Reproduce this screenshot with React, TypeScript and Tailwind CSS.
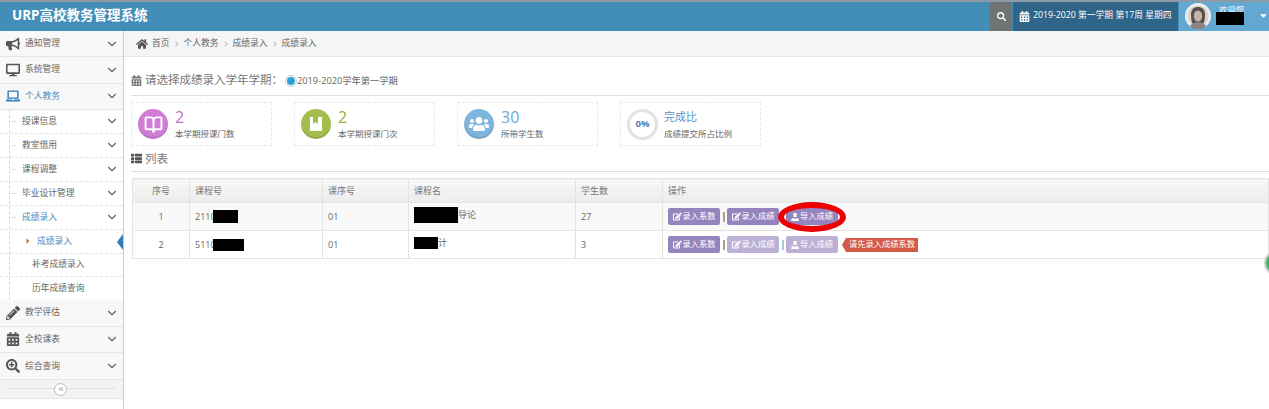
import { ReactNode } from "react";
import {
  FaAngleDoubleLeft,
  FaBullhorn,
  FaCalendarAlt,
  FaCaretDown,
  FaCaretRight,
  FaChevronRight,
  FaDesktop,
  FaEdit,
  FaHome,
  FaLaptop,
  FaPencilAlt,
  FaSearch,
  FaSearchPlus,
  FaThList,
  FaUsers,
} from "react-icons/fa";
import { LuBookOpen, LuChevronDown } from "react-icons/lu";

const FONT = "font-['Open_Sans','Noto_Sans_CJK_SC',sans-serif]";

const SUB_ITEMS = ["授课信息", "教室借用", "课程调整", "毕业设计管理"];

function TopItem({ icon, label, active = false, tall = false }: { icon: ReactNode; label: string; active?: boolean; tall?: boolean }) {
  return (
    <div
      className={`flex items-center border-b border-[#e5e5e5] bg-[#f8f8f8] pr-[4px] text-[8.75px] ${tall ? "h-[26.67px]" : "h-[26.33px]"} ${
        active ? "text-[#4b88c0]" : "text-[#666]"
      }`}
    >
      <span className="flex w-[25px] justify-center text-[14px] text-[#555]">{icon}</span>
      <span className="flex-1">{label}</span>
      <LuChevronDown className="text-[14px] text-[#666]" strokeWidth={2} />
    </div>
  );
}

function SubItem({ label, active = false }: { label: string; active?: boolean }) {
  return (
    <div
      className={`relative flex h-6 items-center border-b border-dashed border-[#e4e4e4] pl-[22px] pr-[4px] text-[8.75px] ${
        active ? "text-[#4b88c0]" : "text-[#666]"
      }`}
    >
      <span className="absolute left-[11px] top-[11px] h-px w-[5px] bg-[#d5e2ec]" />
      <span className="flex-1">{label}</span>
      <LuChevronDown className="text-[14px] text-[#666]" strokeWidth={2} />
    </div>
  );
}

function Stat({ icon, circle, value, valueColor, label }: { icon: ReactNode; circle: string; value: string; valueColor: string; label: string }) {
  return (
    <div className="flex h-[44px] w-[141px] items-center gap-[7px] border border-dashed border-[#e8e8e8] pl-[6px]">
      <div className={`flex size-[30px] items-center justify-center rounded-full text-white shadow-[inset_0_-2px_0_rgba(0,0,0,0.1)] ${circle}`}>{icon}</div>
      <div className="flex flex-col">
        <span className={`text-[16px] leading-[17px] ${valueColor}`}>{value}</span>
        <span className="mt-[2px] text-[8.5px] leading-[11px] text-[#666]">{label}</span>
      </div>
    </div>
  );
}

function BookIcon() {
  return (
    <svg viewBox="0 0 16 16" className="size-[16px]" fill="currentColor">
      <path d="M2 1h3v7l2.500-2L10 8V1h4v14H2z" />
    </svg>
  );
}

function ImportIcon() {
  return (
    <svg viewBox="0 0 10 10" className="size-[8px]" fill="currentColor">
      <path d="M3 0h4v5H3z M1 6.500h2.400L5 7.600l1.600-1.100H9L10 10H0z" />
    </svg>
  );
}

function ActionButton({ icon, label, faded = false }: { icon: ReactNode; label: string; faded?: boolean }) {
  return (
    <span
      className={`flex h-[17px] w-[52px] items-center justify-center gap-px rounded-[2px] text-[8.25px] text-white ${
        faded ? "bg-[#bcb0d4]" : "bg-[#9585bf]"
      }`}
    >
      <span className="text-[9px]">{icon}</span>
      {label}
    </span>
  );
}

function Sep({ blue = false }: { blue?: boolean }) {
  return <span className={`mx-[2.5px] h-[10px] w-[2px] ${blue ? "bg-[#a9c9dd]" : "bg-[#a9a294]"}`} />;
}

function Redact({ className }: { className: string }) {
  return <span className={`inline-block bg-black align-middle ${className}`} />;
}

const CELL = "border-b border-r border-[#e4e4e4] px-[5px] text-[9px] text-[#666] font-normal text-left";
const HEAD = "bg-gradient-to-b from-[#f8f8f8] to-[#ececec] text-[#777]";

export default function App() {
  return (
    <div className={`relative h-[409px] w-[1269px] overflow-hidden bg-white ${FONT}`}>
      {/* Top bar */}
      <header className="flex h-[31px] items-stretch border-t-2 border-[#8c9aa6] bg-[#438eb9]">
        <div className="flex-1 pl-[12px] text-[13.5px] font-bold leading-[27px] text-white">URP高校教务管理系统</div>
        <div className="flex w-[22px] items-center justify-center bg-[#6f7374] text-[9px] text-white">
          <FaSearch />
        </div>
        <div className="ml-px flex w-[165px] items-center gap-[3px] bg-[#2e6589] pb-[1px] pl-[6px] text-[8.75px] text-white">
          <FaCalendarAlt className="text-[11px]" />
          <span>2019-2020 第一学期 第17周 星期四</span>
        </div>
        <div className="ml-px flex w-[90px] items-center bg-[#62a8d1] pb-[2px] pl-[6px] text-white">
          <svg viewBox="0 0 26 26" className="size-[26px] shrink-0">
            <circle cx="13" cy="13" r="13" fill="#eeeeee" />
            <circle cx="13" cy="13" r="10.500" fill="#d8d4d0" />
            <path d="M6 12c0-6 3-8 7-8s7 2 7 8c0 5-1 8-2 9h-10c-1-1-2-4-2-9z" fill="#5b5048" />
            <ellipse cx="13" cy="13" rx="4.200" ry="5.500" fill="#bfb5ad" />
            <path d="M5 23c2-3 5-4 8-4s6 1 8 4a10.500 10.500 0 0 1-16 0z" fill="#8b8581" />
          </svg>
          <div className="ml-[5px] flex w-[39px] flex-col items-start">
            <span className="ml-[3px] h-[6px] text-[8.5px] leading-[8px]">欢迎您</span>
            <Redact className="h-[13px] w-[28px]" />
          </div>
          <FaCaretDown className="ml-[4px] text-[11px]" />
        </div>
      </header>

      <div className="flex h-[378px]">
        {/* Sidebar */}
        <aside className="flex w-[124px] shrink-0 flex-col border-r border-[#cccccc] bg-white">
          <TopItem icon={<FaBullhorn />} label="通知管理" />
          <TopItem icon={<FaDesktop />} label="系统管理" />
          <TopItem icon={<FaLaptop className="text-[#2b7dbc]" />} label="个人教务" active />
          <div className="relative">
            <span className="absolute bottom-0 left-[9px] top-0 border-l border-dashed border-[#c9dbe8]" />
            {SUB_ITEMS.map((label) => (
              <SubItem key={label} label={label} />
            ))}
            <SubItem label="成绩录入" active />
            <div className="relative flex h-[24px] items-center border-b border-dashed border-[#e4e4e4] pl-[24px] text-[8.75px] text-[#4b88c0]">
              <FaCaretRight className="text-[8px] text-[#c86139]" />
              <span className="ml-[5px]">成绩录入</span>
              <span className="absolute right-0 top-[4px] h-0 w-0 border-y-[8px] border-r-[6px] border-y-transparent border-r-[#2b7dbc]" />
            </div>
            <div className="flex h-[23px] items-center border-b border-dashed border-[#e4e4e4] pl-[32px] text-[8.75px] text-[#666]">补考成绩录入</div>
            <div className="flex h-[23px] items-center pl-[32px] text-[8.75px] text-[#666]">历年成绩查询</div>
          </div>
          <TopItem tall icon={<FaPencilAlt />} label="教学评估" />
          <TopItem tall icon={<FaCalendarAlt />} label="全校课表" />
          <TopItem tall icon={<FaSearchPlus />} label="综合查询" />
          <div className="relative flex h-[19px] items-center border-b border-[#e5e5e5] bg-[#f3f3f3] px-[7px]">
            <div className="h-px flex-1 bg-[#e0e0e0]" />
            <span className="absolute left-[54px] top-[3px] flex size-[13px] items-center justify-center rounded-full border border-[#bbbbbb] bg-white text-[6px] text-[#aaa]">
              <FaAngleDoubleLeft />
            </span>
          </div>
        </aside>

        {/* Main */}
        <main className="min-w-0 flex-1">
          <nav className="flex h-[26px] items-center gap-[4px] border-b border-[#e5e5e5] bg-[#f5f5f5] pl-[12px] text-[8.75px] text-[#666]">
            <FaHome className="text-[12px] text-[#555]" />
            <span>首页</span>
            <FaChevronRight className="text-[6px] text-[#bbb]" />
            <span>个人教务</span>
            <FaChevronRight className="text-[6px] text-[#bbb]" />
            <span>成绩录入</span>
            <FaChevronRight className="text-[6px] text-[#bbb]" />
            <span>成绩录入</span>
          </nav>

          <div className="pl-[7px]">
            <div className="flex h-[39px] items-end border-b border-[#dddddd] pb-[8px] text-[#777]">
              <FaCalendarAlt className="mb-[1px] mr-[3px] text-[11px]" />
              <span className="text-[11.5px] leading-[14px]">请选择成绩录入学年学期：</span>
              <span className="ml-[2px] flex size-[12px] items-center justify-center rounded-full border border-[#c8c8c8]">
                <span className="size-[8px] rounded-full bg-[#2a9fd8]" />
              </span>
              <span className="text-[9.25px] leading-[13px] text-[#666]">2019-2020学年第一学期</span>
            </div>

            <div className="mt-[6px] flex gap-[22px]">
              <Stat icon={<LuBookOpen className="text-[19px]" strokeWidth={2.5} />} circle="bg-[#cf7dd6]" value="2" valueColor="text-[#c86bd0]" label="本学期授课门数" />
              <Stat icon={<BookIcon />} circle="bg-[#a5bd4f]" value="2" valueColor="text-[#93b040]" label="本学期授课门次" />
              <Stat icon={<FaUsers className="text-[20px]" />} circle="bg-[#7fb5dd]" value="30" valueColor="text-[#6fa8d8]" label="所带学生数" />
              <div className="flex h-[44px] w-[141px] items-center gap-[6px] border border-dashed border-[#e8e8e8] pl-[6px]">
                <div className="flex size-[31px] items-center justify-center rounded-full border-[3px] border-[#e2e2e2] text-[9.5px] font-bold text-[#4f7fba]">0%</div>
                <div className="flex flex-col">
                  <span className="text-[11px] leading-[16px] text-[#5b92c8]">完成比</span>
                  <span className="mt-[3px] text-[8.5px] leading-[12px] text-[#666]">成绩提交所占比例</span>
                </div>
              </div>
            </div>

            <div className="flex h-[26px] items-center gap-[3px] border-b border-[#dddddd] text-[11.5px] text-[#777]">
              <FaThList className="text-[11px] text-[#555]" />
              <span>列表</span>
            </div>

            <div className="pl-px pt-[6px]">
              <table className="w-full table-fixed border-collapse border-l border-t border-[#e4e4e4]">
                <colgroup>
                  <col className="w-[57px]" />
                  <col className="w-[133px]" />
                  <col className="w-[86px]" />
                  <col className="w-[167px]" />
                  <col className="w-[87px]" />
                  <col />
                </colgroup>
                <thead>
                  <tr className="h-[24px]">
                    <th className={`${CELL} ${HEAD} !text-center`}>序号</th>
                    <th className={`${CELL} ${HEAD}`}>课程号</th>
                    <th className={`${CELL} ${HEAD}`}>课序号</th>
                    <th className={`${CELL} ${HEAD}`}>课程名</th>
                    <th className={`${CELL} ${HEAD}`}>学生数</th>
                    <th className={`${CELL} ${HEAD}`}>操作</th>
                  </tr>
                </thead>
                <tbody>
                  <tr className="h-[28px] bg-[#f9f9f9]">
                    <td className={`${CELL} !text-center`}>1</td>
                    <td className={CELL}>
                      <span className="inline-flex items-center">
                        2110
                        <Redact className="-ml-[3px] h-[13px] w-[25px]" />
                      </span>
                    </td>
                    <td className={CELL}>01</td>
                    <td className={CELL}>
                      <span className="inline-flex items-center">
                        <Redact className="h-[16px] w-[44px]" />
                        导论
                      </span>
                    </td>
                    <td className={CELL}>27</td>
                    <td className={CELL}>
                      <div className="flex items-center">
                        <ActionButton icon={<FaEdit />} label="录入系数" />
                        <Sep />
                        <ActionButton icon={<FaEdit />} label="录入成绩" />
                        <Sep />
                        <ActionButton icon={<ImportIcon />} label="导入成绩" />
                      </div>
                    </td>
                  </tr>
                  <tr className="h-[28px]">
                    <td className={`${CELL} !text-center`}>2</td>
                    <td className={CELL}>
                      <span className="inline-flex items-center">
                        5110
                        <Redact className="-ml-[3px] h-[12px] w-[31px]" />
                      </span>
                    </td>
                    <td className={CELL}>01</td>
                    <td className={CELL}>
                      <span className="inline-flex items-center">
                        <Redact className="h-[12px] w-[24px]" />
                        计
                      </span>
                    </td>
                    <td className={CELL}>3</td>
                    <td className={CELL}>
                      <div className="flex items-center">
                        <ActionButton icon={<FaEdit />} label="录入系数" />
                        <Sep />
                        <ActionButton icon={<FaEdit />} label="录入成绩" faded />
                        <Sep blue />
                        <ActionButton icon={<ImportIcon />} label="导入成绩" faded />
                        <span className="ml-[4px] h-0 w-0 border-y-[7px] border-r-[4px] border-y-transparent border-r-[#d15b47]" />
                        <span className="flex h-[14px] items-center bg-[#d15b47] px-[3px] text-[8.25px] text-white">请先录入成绩系数</span>
                      </div>
                    </td>
                  </tr>
                </tbody>
              </table>
            </div>
          </div>
        </main>
      </div>

      {/* Red marker drawn over the screenshot */}
      <span className="absolute left-[778px] top-[202px] h-[30px] w-[68px] rounded-[50%] border-[6px] border-[#ee0000]" />
      {/* Floating green button at the page edge */}
      <span className="absolute left-[1264px] top-[250px] size-[26px] rounded-full border-2 border-[#cfcfcf] bg-[#35b85a]" />
    </div>
  );
}
